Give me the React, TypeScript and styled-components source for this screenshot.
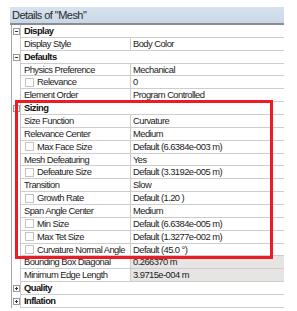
import styled, { createGlobalStyle } from "styled-components";

const GlobalStyle = createGlobalStyle`
  body {
    margin: 0;
    background: #ffffff;
    font-family: "Liberation Sans", Arial, sans-serif;
  }
`;

type Row =
  | { kind: "cat"; label: string; open: boolean }
  | { kind: "prop"; label: string; value: string; check?: boolean; gray?: boolean };

const rows: Row[] = [
  { kind: "cat", label: "Display", open: true },
  { kind: "prop", label: "Display Style", value: "Body Color" },
  { kind: "cat", label: "Defaults", open: true },
  { kind: "prop", label: "Physics Preference", value: "Mechanical" },
  { kind: "prop", label: "Relevance", value: "0", check: true },
  { kind: "prop", label: "Element Order", value: "Program Controlled" },
  { kind: "cat", label: "Sizing", open: true },
  { kind: "prop", label: "Size Function", value: "Curvature" },
  { kind: "prop", label: "Relevance Center", value: "Medium" },
  { kind: "prop", label: "Max Face Size", value: "Default (6.6384e-003 m)", check: true },
  { kind: "prop", label: "Mesh Defeaturing", value: "Yes" },
  { kind: "prop", label: "Defeature Size", value: "Default (3.3192e-005 m)", check: true },
  { kind: "prop", label: "Transition", value: "Slow" },
  { kind: "prop", label: "Growth Rate", value: "Default (1.20 )", check: true },
  { kind: "prop", label: "Span Angle Center", value: "Medium" },
  { kind: "prop", label: "Min Size", value: "Default (6.6384e-005 m)", check: true },
  { kind: "prop", label: "Max Tet Size", value: "Default (1.3277e-002 m)", check: true },
  { kind: "prop", label: "Curvature Normal Angle", value: "Default (45.0 °)", check: true },
  { kind: "prop", label: "Bounding Box Diagonal", value: "0.266370 m", gray: true },
  { kind: "prop", label: "Minimum Edge Length", value: "3.9715e-004 m", gray: true },
  { kind: "cat", label: "Quality", open: false },
  { kind: "cat", label: "Inflation", open: false },
];

const Panel = styled.div`
  position: relative;
  width: 274px;
  padding: 7px 0 0 10px;
  color: #1c1c1c;
`;

const Header = styled.div`
  box-sizing: border-box;
  height: 18px;
  line-height: 16px;
  padding-left: 2px;
  font-size: 11px;
  letter-spacing: -0.55px;
  color: #2a2a2a;
  background: linear-gradient(#d6e2ef, #c9d8e8);
  border-bottom: 2px solid #8c8c8c;
`;

const Table = styled.div`
  display: flex;
  flex-direction: column;
  padding-left: 1px;
`;

/* the source shot is slightly scaled, so a row is a bit under 13px */
const RowBox = styled.div<{ $cat?: boolean }>`
  flex: none;
  box-sizing: border-box;
  display: grid;
  grid-template-columns: ${(p) => (p.$cat ? "10px 1fr" : "10px 110px 1fr")};
  height: 12.86px;
  font-size: 9.4px;
  letter-spacing: -0.55px;
  line-height: 12px;
`;

const ExpandCell = styled.div`
  border-left: 1px solid #a8a8a8;
  border-right: 1px solid #c9c9c9;
  display: flex;
  align-items: center;
  padding-left: 1px;
`;

const Expander = styled.span<{ $open: boolean }>`
  position: relative;
  width: 5px;
  height: 5px;
  border: 1px solid #9a9a9a;
  background: #fff;
  &::before {
    content: "";
    position: absolute;
    left: 1px;
    top: 2px;
    width: 3px;
    height: 1px;
    background: #333;
  }
  &::after {
    content: "";
    display: ${(p) => (p.$open ? "none" : "block")};
    position: absolute;
    left: 2px;
    top: 1px;
    width: 1px;
    height: 3px;
    background: #333;
  }
`;

const CatLabel = styled.div`
  font-weight: bold;
  color: #111;
  padding-left: 3px;
  border-bottom: 1px solid #cdcdcd;
`;

const Label = styled.div<{ $check?: boolean }>`
  display: flex;
  align-items: center;
  padding-left: ${(p) => (p.$check ? "4px" : "3px")};
  border-bottom: 1px solid #cdcdcd;
  border-right: 1px solid #cdcdcd;
  white-space: nowrap;
  overflow: hidden;
`;

const Check = styled.span`
  width: 7px;
  height: 7px;
  margin-right: 3px;
  border: 1px solid #c4c4c4;
  background: #fff;
  flex: none;
`;

const Value = styled.div<{ $gray?: boolean }>`
  padding-left: 2px;
  border-bottom: 1px solid #cdcdcd;
  background: ${(p) => (p.$gray ? "#e6e5e3" : "#fff")};
  white-space: nowrap;
  overflow: hidden;
`;

const Highlight = styled.div`
  position: absolute;
  left: 15px;
  top: 100px;
  width: 252px;
  height: 153px;
  border: 3px solid #ec1c24;
  pointer-events: none;
`;

export default function App() {
  return (
    <>
      <GlobalStyle />
      <Panel>
        <Header>Details of "Mesh"</Header>
        <Table>
          {rows.map((r) =>
            r.kind === "cat" ? (
              <RowBox $cat key={r.label}>
                <ExpandCell>
                  <Expander $open={r.open} />
                </ExpandCell>
                <CatLabel>{r.label}</CatLabel>
              </RowBox>
            ) : (
              <RowBox key={r.label}>
                <ExpandCell />
                <Label $check={r.check}>
                  {r.check && <Check />}
                  {r.label}
                </Label>
                <Value $gray={r.gray}>{r.value}</Value>
              </RowBox>
            )
          )}
        </Table>
        <Highlight />
      </Panel>
    </>
  );
}
